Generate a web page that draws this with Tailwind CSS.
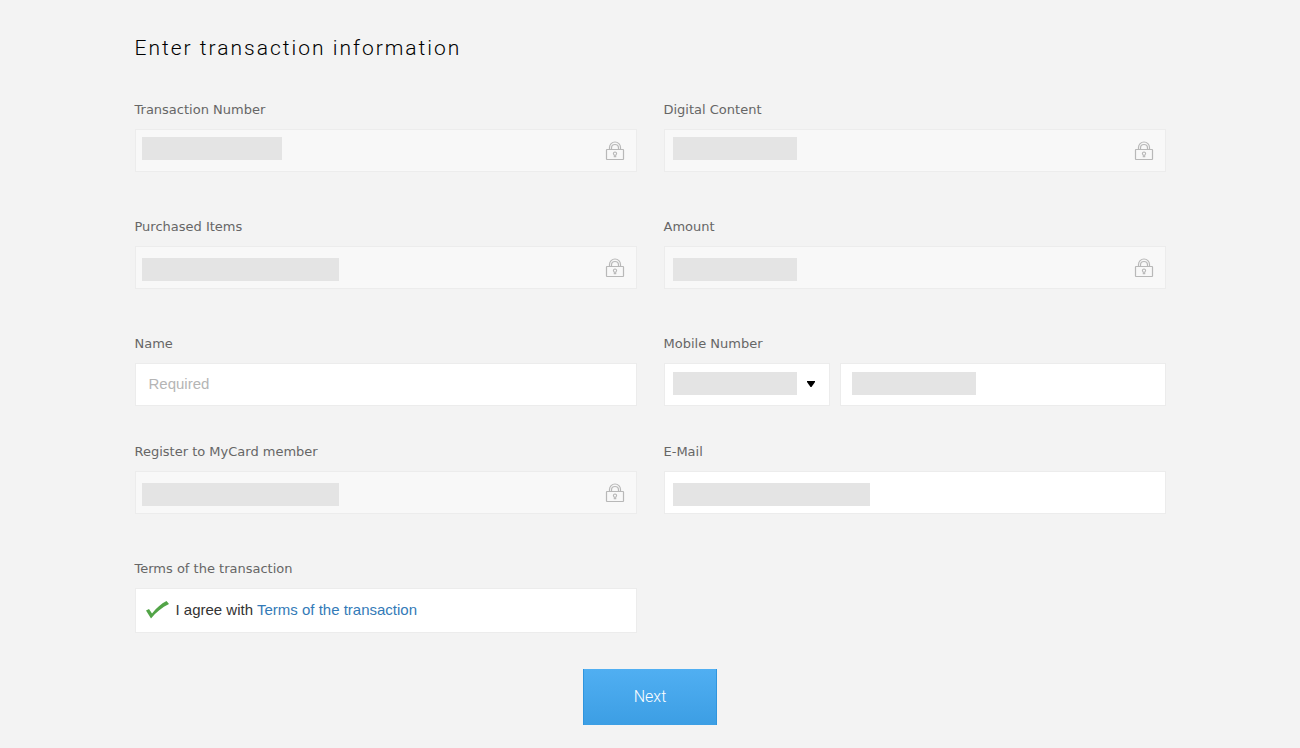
<!DOCTYPE html>
<html lang="en">
<head>
  <meta charset="UTF-8" />
  <meta name="viewport" content="width=device-width, initial-scale=1.0" />
  <title>Enter transaction information</title>
  <script src="https://cdn.jsdelivr.net/npm/@tailwindcss/browser@4"></script>
</head>
<body class="bg-[#f3f3f3] min-h-screen px-6 pt-8 pb-6 font-['Liberation_Sans',Arial,sans-serif] text-[15px] text-[#333]">
  <!-- lock shown in read-only fields -->
  <svg class="hidden">
    <symbol id="lock" viewBox="0 0 20 20">
      <g fill="none" stroke="#b8b8b8">
        <rect x="1.5" y="8.5" width="17" height="10" rx="0.5" stroke-width="1.2" />
        <path d="M4.5 8V6.5a5.5 5.5 0 0 1 11 0V8" stroke-width="1.2" />
        <path d="M6.5 8V7a3.5 3.5 0 0 1 7 0v1" stroke-width="1.2" />
        <path d="M9.3 14a1.6 1.6 0 1 1 1.4 0v1.7H9.3z" stroke-width="1.1" />
      </g>
    </symbol>
  </svg>

  <form class="max-w-[1031px] mx-auto" onsubmit="return false">
    <h1 class="font-[Roboto,sans-serif] font-light text-[21px] leading-8 tracking-[2px] text-black">Enter transaction information</h1>

    <div class="grid grid-cols-2 gap-x-[27px] mt-[35px]">
      <div class="mb-11">
        <label for="number" class="block mb-2 font-['DejaVu_Sans',Verdana,sans-serif] text-[13px] leading-[22px] text-[#666]">Transaction Number</label>
        <div class="relative h-[43px]">
          <input id="number" type="text" readonly class="block w-full h-full bg-[#f8f8f8] border border-[#ececec] px-3" />
          <span class="absolute left-[7px] top-2 w-[140px] h-[23px] bg-[#e4e4e4]"></span>
          <svg class="absolute right-3 top-3 size-5"><use href="#lock" /></svg>
        </div>
      </div>

      <div class="mb-11">
        <label for="content" class="block mb-2 font-['DejaVu_Sans',Verdana,sans-serif] text-[13px] leading-[22px] text-[#666]">Digital Content</label>
        <div class="relative h-[43px]">
          <input id="content" type="text" readonly class="block w-full h-full bg-[#f8f8f8] border border-[#ececec] px-3" />
          <span class="absolute left-[9px] top-2 w-[124px] h-[23px] bg-[#e4e4e4]"></span>
          <svg class="absolute right-3 top-3 size-5"><use href="#lock" /></svg>
        </div>
      </div>

      <div class="mb-11">
        <label for="items" class="block mb-2 font-['DejaVu_Sans',Verdana,sans-serif] text-[13px] leading-[22px] text-[#666]">Purchased Items</label>
        <div class="relative h-[43px]">
          <input id="items" type="text" readonly class="block w-full h-full bg-[#f8f8f8] border border-[#ececec] px-3" />
          <span class="absolute left-[7px] top-3 w-[197px] h-[23px] bg-[#e4e4e4]"></span>
          <svg class="absolute right-3 top-3 size-5"><use href="#lock" /></svg>
        </div>
      </div>

      <div class="mb-11">
        <label for="amount" class="block mb-2 font-['DejaVu_Sans',Verdana,sans-serif] text-[13px] leading-[22px] text-[#666]">Amount</label>
        <div class="relative h-[43px]">
          <input id="amount" type="text" readonly class="block w-full h-full bg-[#f8f8f8] border border-[#ececec] px-3" />
          <span class="absolute left-[9px] top-3 w-[124px] h-[23px] bg-[#e4e4e4]"></span>
          <svg class="absolute right-3 top-3 size-5"><use href="#lock" /></svg>
        </div>
      </div>

      <div class="mb-[35px]">
        <label for="name" class="block mb-2 font-['DejaVu_Sans',Verdana,sans-serif] text-[13px] leading-[22px] text-[#666]">Name</label>
        <input id="name" type="text" placeholder="Required" class="block w-full h-[43px] bg-white border border-[#ececec] px-[13px] pb-[2px] placeholder:text-[#b5b5b5]" />
      </div>

      <div class="mb-[35px]">
        <label for="mobile" class="block mb-2 font-['DejaVu_Sans',Verdana,sans-serif] text-[13px] leading-[22px] text-[#666]">Mobile Number</label>
        <div class="flex gap-[10px]">
          <div class="relative w-[166px] h-[43px]">
            <select aria-label="Country code" class="block w-full h-full appearance-none bg-white border border-[#ececec]"></select>
            <span class="absolute left-[9px] top-[9px] w-[124px] h-[23px] bg-[#e4e4e4] pointer-events-none"></span>
            <svg class="absolute right-[15px] top-[18px] w-2 h-[6px] pointer-events-none" viewBox="0 0 8 6"><path d="M0 0h8v1L4.5 6h-1L0 1z" fill="#000" /></svg>
          </div>
          <div class="relative flex-1 h-[43px]">
            <input id="mobile" type="tel" class="block w-full h-full bg-white border border-[#ececec] px-3" />
            <span class="absolute left-3 top-[9px] w-[124px] h-[23px] bg-[#e4e4e4] pointer-events-none"></span>
          </div>
        </div>
      </div>

      <div class="mb-11">
        <label for="member" class="block mb-2 font-['DejaVu_Sans',Verdana,sans-serif] text-[13px] leading-[22px] text-[#666]">Register to MyCard member</label>
        <div class="relative h-[43px]">
          <input id="member" type="text" readonly class="block w-full h-full bg-[#f8f8f8] border border-[#ececec] px-3" />
          <span class="absolute left-[7px] top-3 w-[197px] h-[23px] bg-[#e4e4e4]"></span>
          <svg class="absolute right-3 top-3 size-5"><use href="#lock" /></svg>
        </div>
      </div>

      <div class="mb-11">
        <label for="email" class="block mb-2 font-['DejaVu_Sans',Verdana,sans-serif] text-[13px] leading-[22px] text-[#666]">E-Mail</label>
        <div class="relative h-[43px]">
          <input id="email" type="email" class="block w-full h-full bg-white border border-[#ececec] px-3" />
          <span class="absolute left-[9px] top-3 w-[197px] h-[23px] bg-[#e4e4e4] pointer-events-none"></span>
        </div>
      </div>

      <div>
        <p class="mb-2 font-['DejaVu_Sans',Verdana,sans-serif] text-[13px] leading-[22px] text-[#666]">Terms of the transaction</p>
        <div class="flex items-center h-[45px] bg-white border border-[#ececec] px-[10px]">
          <span class="relative w-6 h-5 mr-[6px]">
            <input id="agree" type="checkbox" checked class="peer block w-full h-full appearance-none" />
            <svg class="absolute inset-0 hidden peer-checked:block w-6 h-5 pointer-events-none" viewBox="0 0 24 20"><path d="M0 9.5L3 8l3 4.5C10.5 7 15 2.5 20.5 0L23 3C16 6.5 10 11 5 17.5z" fill="#52a447" /></svg>
          </span>
          <label for="agree">I agree with <a href="#" class="text-[#337ab7]">Terms of the transaction</a></label>
        </div>
      </div>
    </div>

    <button type="submit" class="block w-[134px] h-14 mx-auto mt-9 bg-linear-to-b from-[#50aff2] to-[#3c9ee4] border-x border-[#2f95de] font-[Roboto,sans-serif] font-light text-base text-white">Next</button>
  </form>
</body>
</html>
